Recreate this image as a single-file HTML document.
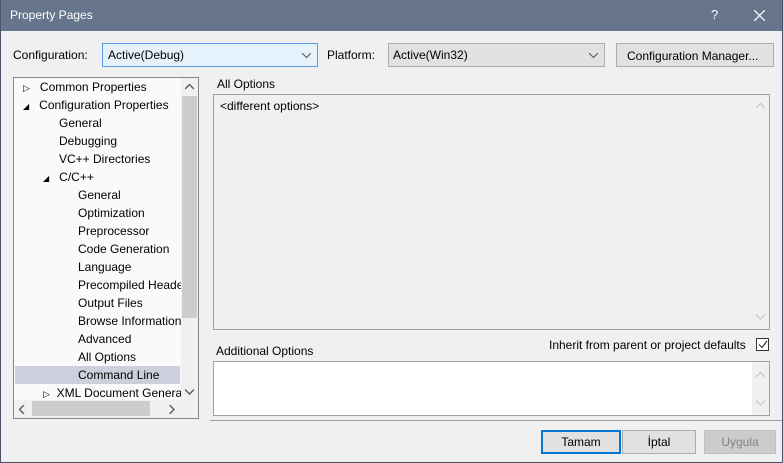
<!DOCTYPE html>
<html><head><style>
*{margin:0;padding:0;box-sizing:border-box}
body{width:783px;height:463px;overflow:hidden;background:#f0f0f0;font-family:"Liberation Sans",sans-serif;font-size:12px;color:#000;position:relative}
.a{position:absolute;white-space:nowrap}
.frame{position:absolute;left:0;top:0;width:783px;height:463px;border:1px solid #4a5466;border-top:none}
.title{left:0;top:0;width:783px;height:31px;background:#66758b;color:#fff}
.cb{border:1px solid #adadad;background:#e1e1e1}
.t{position:absolute;left:0;height:18px;line-height:18px}
.tri{font-size:9px}
</style></head><body>
<div class="a title"><span class="a" style="left:10px;top:8px;font-size:12px">Property Pages</span>
<span class="a" style="left:711px;top:7px;font-size:13px">?</span>
<svg class="a" style="left:754px;top:10px" width="11" height="11"><path d="M0 0L11 11M11 0L0 11" stroke="#fff" stroke-width="1.3"/></svg></div>

<span class="a" style="left:13px;top:48px">Configuration:</span>
<div class="a" style="left:102px;top:43px;width:216px;height:24px;border:1px solid #569de5;background:#e5f1fb"><span class="a" style="left:5px;top:4px">Active(Debug)</span><svg class="a" style="left:199px;top:9px" width="9" height="6"><path d="M0 0L4.5 4.5L9 0" stroke="#555" fill="none"/></svg></div>
<span class="a" style="left:327px;top:48px">Platform:</span>
<div class="a cb" style="left:388px;top:43px;width:217px;height:24px"><span class="a" style="left:4px;top:4px">Active(Win32)</span><svg class="a" style="left:200px;top:9px" width="9" height="6"><path d="M0 0L4.5 4.5L9 0" stroke="#555" fill="none"/></svg></div>
<div class="a cb" style="left:616px;top:43px;width:158px;height:24px"><span class="a" style="left:10px;top:5px">Configuration Manager...</span></div>

<div class="a" style="left:13px;top:77px;width:186px;height:342px;border:1px solid #828790;background:#fafafa;overflow:hidden">
<div class="a" style="left:1px;top:288px;width:165px;height:18px;background:#cdd0dc"></div>
<div class="a" style="left:0;top:-1px;width:168px;height:323px;overflow:hidden">
<div class="t" style="top:1px;left:9px"><span class="tri">▷</span>&nbsp;&nbsp; Common Properties</div>
<div class="t" style="top:19px;left:9px"><span style="font-size:8px">◢</span>&nbsp;&nbsp; Configuration Properties</div>
<div class="t" style="top:37px;left:45px">General</div>
<div class="t" style="top:55px;left:45px">Debugging</div>
<div class="t" style="top:73px;left:45px">VC++ Directories</div>
<div class="t" style="top:91px;left:29px"><span style="font-size:8px">◢</span>&nbsp;&nbsp; C/C++</div>
<div class="t" style="top:109px;left:64px">General</div>
<div class="t" style="top:127px;left:64px">Optimization</div>
<div class="t" style="top:145px;left:64px">Preprocessor</div>
<div class="t" style="top:163px;left:64px">Code Generation</div>
<div class="t" style="top:181px;left:64px">Language</div>
<div class="t" style="top:199px;left:64px">Precompiled Headers</div>
<div class="t" style="top:217px;left:64px">Output Files</div>
<div class="t" style="top:235px;left:64px">Browse Information</div>
<div class="t" style="top:253px;left:64px">Advanced</div>
<div class="t" style="top:271px;left:64px">All Options</div>
<div class="t" style="top:289px;left:64px">Command Line</div>
<div class="t" style="top:307px;left:29px"><span class="tri">▷</span>&nbsp; XML Document Generator</div>
</div>
<div class="a" style="left:167px;top:0;width:17px;height:322px;background:#f0f0f0"></div>
<div class="a" style="left:168px;top:18px;width:15px;height:222px;background:#cdcdcd"></div>
<svg class="a" style="left:171px;top:6px" width="9" height="6"><path d="M0 5L4.5 0.5L9 5" stroke="#606060" stroke-width="1.5" fill="none"/></svg>
<svg class="a" style="left:171px;top:311px" width="9" height="6"><path d="M0 0.5L4.5 5L9 0.5" stroke="#606060" stroke-width="1.5" fill="none"/></svg>
<div class="a" style="left:0;top:322px;width:184px;height:18px;background:#f0f0f0"></div>
<div class="a" style="left:18px;top:323px;width:118px;height:15px;background:#cdcdcd"></div>
<svg class="a" style="left:5px;top:327px" width="6" height="9"><path d="M5 0L0.5 4.5L5 9" stroke="#606060" stroke-width="1.5" fill="none"/></svg>
<svg class="a" style="left:155px;top:327px" width="6" height="9"><path d="M0.5 0L5 4.5L0.5 9" stroke="#606060" stroke-width="1.5" fill="none"/></svg>
</div>

<span class="a" style="left:217px;top:77px">All Options</span>
<div class="a" style="left:213px;top:94px;width:557px;height:236px;border:1px solid #a0a0a0;background:#f0f0f0">
<span class="a" style="left:6px;top:4px">&lt;different options&gt;</span>
<svg class="a" style="left:542px;top:8px" width="9" height="6"><path d="M0 5L4.5 0.5L9 5" stroke="#c0c0c0" fill="none"/></svg>
<svg class="a" style="left:542px;top:219px" width="9" height="6"><path d="M0 0.5L4.5 5L9 0.5" stroke="#c0c0c0" fill="none"/></svg>
</div>
<span class="a" style="left:216px;top:344px">Additional Options</span>
<span class="a" style="left:549px;top:338px">Inherit from parent or project defaults</span>
<div class="a" style="left:756px;top:338px;width:13px;height:13px;border:1px solid #333;background:#fff"><svg class="a" style="left:1px;top:1px" width="10" height="9"><path d="M1 4.5L4 7.5L9 1" stroke="#333" stroke-width="1.2" fill="none"/></svg></div>
<div class="a" style="left:213px;top:361px;width:557px;height:55px;border:1px solid #a0a0a0;background:#fff">
<div class="a" style="right:0;top:0;width:17px;height:53px;background:#f0f0f0"></div>
<svg class="a" style="left:542px;top:10px" width="9" height="6"><path d="M0 5L4.5 0.5L9 5" stroke="#c0c0c0" fill="none"/></svg>
<svg class="a" style="left:542px;top:38px" width="9" height="6"><path d="M0 0.5L4.5 5L9 0.5" stroke="#c0c0c0" fill="none"/></svg>
</div>
<div class="a" style="left:210px;top:420px;width:573px;height:1px;background:#a0a0a0"></div>

<div class="a" style="left:541px;top:430px;width:80px;height:24px;border:2px solid #0078d7;background:#e1e1e1;text-align:center;line-height:20px">Tamam</div>
<div class="a cb" style="left:622px;top:430px;width:74px;height:24px;text-align:center;line-height:22px">İptal</div>
<div class="a" style="left:704px;top:430px;width:72px;height:24px;border:1px solid #bfbfbf;background:#cccccc;color:#838383;text-align:center;line-height:22px">Uygula</div>
<div class="frame"></div>
</body></html>
